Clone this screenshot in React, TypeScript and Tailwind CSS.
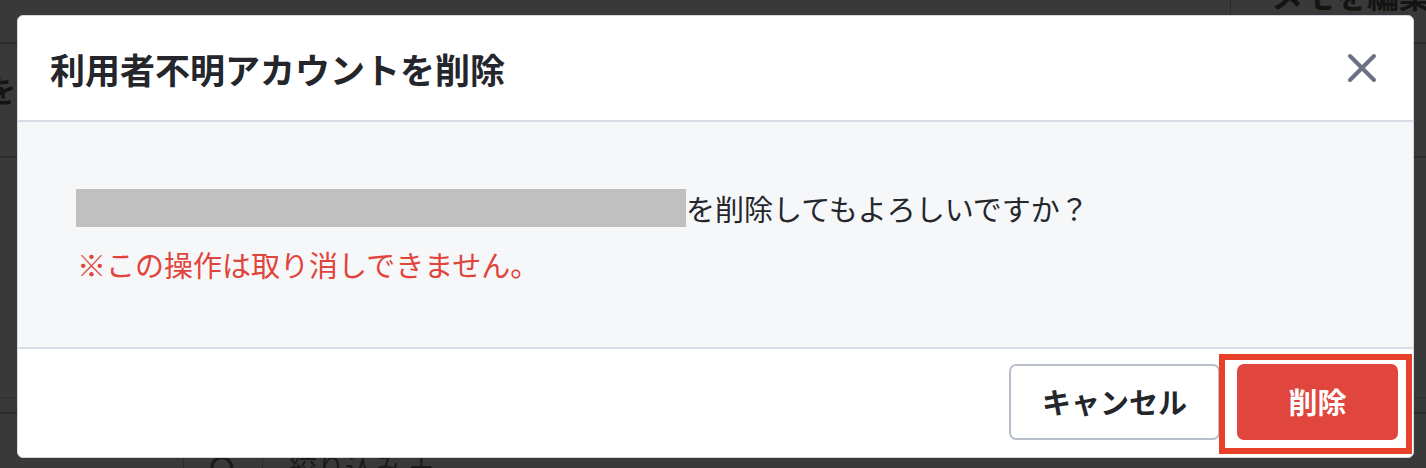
import { X, Search } from "lucide-react";

const jp = { fontFamily: '"Noto Sans CJK JP", "Noto Sans", sans-serif' };

// the page under the dim overlay, barely visible at the edges
function Backdrop() {
  return (
    <div className="absolute inset-0 flex flex-col text-[#141414]" style={jp}>
      <div className="flex h-[44px] shrink-0 justify-end border-b-2 border-[#2b2b2b]">
        <div className="flex w-[196px] items-end overflow-hidden border-l border-[#2b2b2b] pb-[32px] pl-[40px]">
          <span className="whitespace-nowrap text-[32px] font-bold leading-none">メモを編集</span>
        </div>
      </div>
      <div className="flex h-[114px] shrink-0 items-start border-b-2 border-[#2d2d2d] pt-[30px]">
        <span className="-ml-[14px] text-[30px] font-bold leading-none">を</span>
      </div>
      <div className="h-[240px] shrink-0 border-b border-[#2e2e2e]" />
      <div className="h-[16px] shrink-0 border-b-2 border-[#2b2b2b]" />
      <div className="flex flex-1 items-start pl-[183px] pt-[38px]">
        <div className="flex h-[40px] w-[80px] justify-center border-x border-[#2b2b2b] pt-[2px]">
          <Search className="h-[30px] w-[30px] text-[#1a1a1a]" strokeWidth={2.5} />
        </div>
        <span className="ml-[26px] whitespace-nowrap text-[28px] leading-none text-[#1a1a1a]">絞り込み ＋</span>
      </div>
    </div>
  );
}

export default function App() {
  return (
    <div className="relative h-[468px] w-[1426px] overflow-hidden bg-[#393939]">
      <Backdrop />
      <div className="relative pl-[17px] pt-[15px]">
        <div
          className="flex h-[443px] w-[1397px] flex-col overflow-hidden rounded-[6px] border border-[#d3d7df] bg-white text-[#24262b]"
          style={jp}
        >
          <div className="flex h-[106px] shrink-0 items-center justify-between border-b-2 border-[#d8dce4] pl-[32px] pr-[27px]">
            <h2 className="text-[35px] font-bold leading-none">利用者不明アカウントを削除</h2>
            <X className="h-[48px] w-[48px] text-[#6b7280]" strokeWidth={2} />
          </div>

          <div className="h-[225px] shrink-0 bg-[#f6f7f9] pl-[58px] pt-[58px] text-[29px] leading-[56px]">
            <p className="flex items-center">
              <span className="inline-block h-[38px] w-[610px] bg-[#c0c0c0]" />
              <span>を削除してもよろしいですか？</span>
            </p>
            <p className="pl-[1px] text-[#e0443a]">※この操作は取り消しできません。</p>
          </div>

          <div className="relative flex flex-1 items-start justify-end gap-[17px] border-t-2 border-[#d8dce4] pr-[15px] pt-[15px]">
            <button className="h-[76px] w-[211px] rounded-[7px] border-2 border-[#b9bfca] bg-white text-[29px] font-bold text-[#24262b]">
              キャンセル
            </button>
            <button className="h-[76px] w-[161px] rounded-[7px] bg-[#e0463d] text-[29px] font-bold text-white">
              削除
            </button>
            {/* highlight frame drawn over the delete button */}
            <div className="pointer-events-none absolute right-[1px] top-[5px] h-[100px] w-[193px] border-[6px] border-[#e8412a]" />
          </div>
        </div>
      </div>
    </div>
  );
}
